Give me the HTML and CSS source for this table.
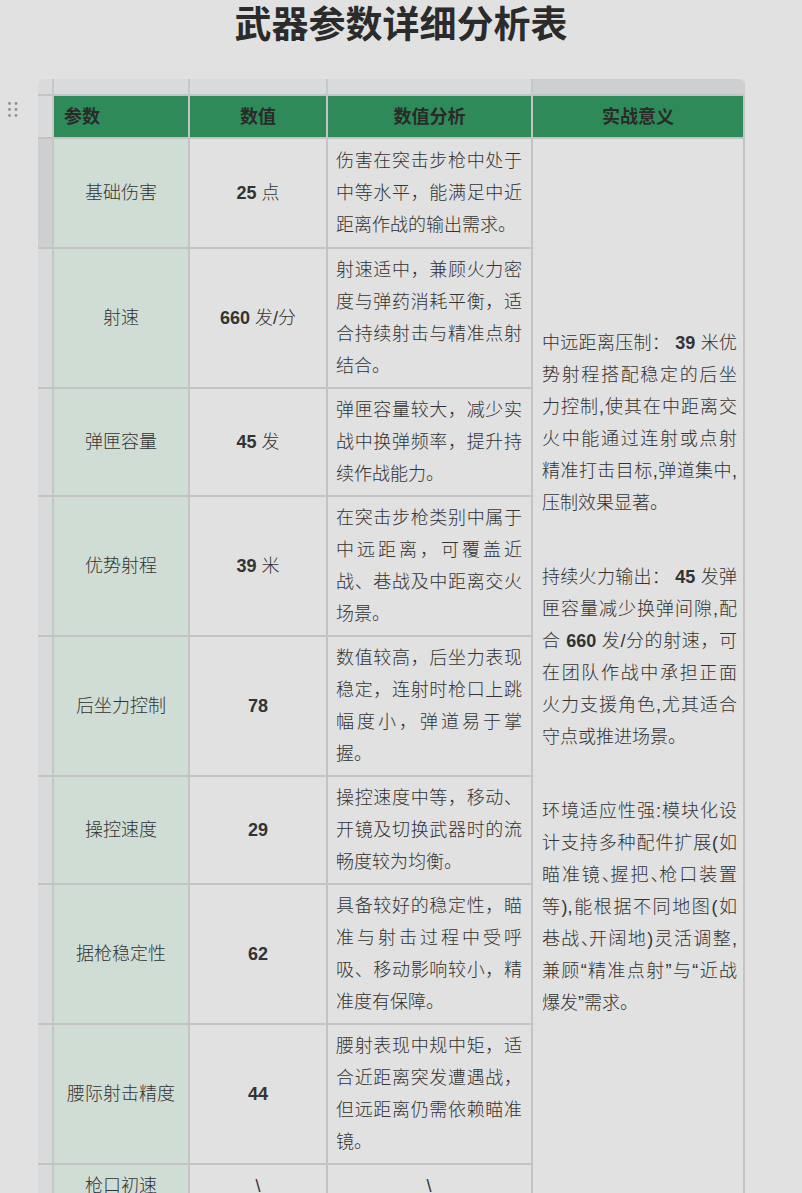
FILE: index.html
```html
<!DOCTYPE html>
<html lang="zh-CN">
<head>
<meta charset="utf-8">
<title>武器参数详细分析表</title>
<link rel="stylesheet" href="styles.css">
</head>
<body>
<h1 class="title">武器参数详细分析表</h1>
<div class="sheet">
  <svg class="handle" width="10" height="15" viewBox="0 0 10 15" aria-hidden="true">
    <circle cx="1.5" cy="1.5" r="1.4"/><circle cx="8" cy="1.5" r="1.4"/>
    <circle cx="1.5" cy="7.5" r="1.4"/><circle cx="8" cy="7.5" r="1.4"/>
    <circle cx="1.5" cy="13.5" r="1.4"/><circle cx="8" cy="13.5" r="1.4"/>
  </svg>
  <table class="grid">
    <colgroup>
      <col class="c-gut"><col class="c-1"><col class="c-2"><col class="c-3"><col class="c-4">
    </colgroup>
    <tr class="gut-row">
      <td class="gut corner"></td><td class="gut"></td><td class="gut"></td><td class="gut"></td><td class="gut gut-sel gut-end"></td>
    </tr>
    <tr class="head">
      <td class="gut"></td><th class="h-left">参数</th><th>数值</th><th>数值分析</th><th>实战意义</th>
    </tr>
    <tr class="first">
      <td class="gut gut-sel"></td>
      <td class="name">基础伤害</td>
      <td class="val"><span class="num">25</span> 点</td>
      <td class="txt">伤害在突击步枪中处于中等水平，能满足中近距离作战的输出需求。</td>
      <td class="meaning" rowspan="9">
        <p>中远距离压制： <span class="num">39</span> 米优势射程搭配稳定的后坐力控制,使其在中距离交火中能通过连射或点射精准打击目标,弹道集中,压制效果显著。</p>
        <p>持续火力输出： <span class="num">45</span> 发弹匣容量减少换弹间隙,配合 <span class="num">660</span> 发/分的射速，可在团队作战中承担正面火力支援角色,尤其适合守点或推进场景。</p>
        <p>环境适应性强:模块化设计支持多种配件扩展(如瞄准镜<span class="half">、</span>握把<span class="half">、</span>枪口装置等),能根据不同地图(如巷战<span class="half">、</span>开阔地)灵活调整,兼顾“精准点射”与“近战爆发”需求。</p>
      </td>
    </tr>
    <tr>
      <td class="gut"></td>
      <td class="name">射速</td>
      <td class="val"><span class="num">660</span> 发/分</td>
      <td class="txt">射速适中，兼顾火力密度与弹药消耗平衡，适合持续射击与精准点射结合。</td>
    </tr>
    <tr>
      <td class="gut"></td>
      <td class="name">弹匣容量</td>
      <td class="val"><span class="num">45</span> 发</td>
      <td class="txt">弹匣容量较大，减少实战中换弹频率，提升持续作战能力。</td>
    </tr>
    <tr>
      <td class="gut"></td>
      <td class="name">优势射程</td>
      <td class="val"><span class="num">39</span> 米</td>
      <td class="txt">在突击步枪类别中属于中远距离，可覆盖近战、巷战及中距离交火场景。</td>
    </tr>
    <tr>
      <td class="gut"></td>
      <td class="name">后坐力控制</td>
      <td class="val"><span class="num">78</span></td>
      <td class="txt">数值较高，后坐力表现稳定，连射时枪口上跳幅度小，弹道易于掌握。</td>
    </tr>
    <tr>
      <td class="gut"></td>
      <td class="name">操控速度</td>
      <td class="val"><span class="num">29</span></td>
      <td class="txt">操控速度中等，移动、开镜及切换武器时的流畅度较为均衡。</td>
    </tr>
    <tr>
      <td class="gut"></td>
      <td class="name">据枪稳定性</td>
      <td class="val"><span class="num">62</span></td>
      <td class="txt">具备较好的稳定性，瞄准与射击过程中受呼吸、移动影响较小，精准度有保障。</td>
    </tr>
    <tr>
      <td class="gut"></td>
      <td class="name">腰际射击精度</td>
      <td class="val"><span class="num">44</span></td>
      <td class="txt">腰射表现中规中矩，适合近距离突发遭遇战，但远距离仍需依赖瞄准镜。</td>
    </tr>
    <tr>
      <td class="gut"></td>
      <td class="name">枪口初速</td>
      <td class="val">\</td>
      <td class="txt center">\</td>
    </tr>
  </table>
</div>
</body>
</html>
```

FILE: styles.css
```css
* {
  box-sizing: border-box;
}

html,
body {
  margin: 0;
  background: #e1e1e1;
}

body {
  font-family: "Liberation Sans", "Noto Sans CJK SC", sans-serif;
  color: #333333;
}

.title {
  margin: 0;
  font-size: 37px;
  line-height: 52px;
  font-weight: 700;
  text-align: center;
  color: #2b2b2b;
}

.sheet {
  position: relative;
  width: 707px;
  margin: 27px 0 0 38px;
}

.handle {
  position: absolute;
  left: -30px;
  top: 23px;
  fill: #8d8f94;
}

.grid {
  width: 707px;
  table-layout: fixed;
  border-collapse: separate;
  border-spacing: 0;
  font-size: 18px;
  line-height: 32px;
}

.c-gut { width: 16px; }
.c-1 { width: 136px; }
.c-2 { width: 138px; }
.c-3 { width: 205px; }
.c-4 { width: 212px; }

.grid td,
.grid th {
  padding: 5px 10px;
  border-right: 2px solid #c3c3c3;
  border-bottom: 2px solid #c3c3c3;
  background: #e1e1e1;
  vertical-align: middle;
  font-weight: 300;
}

.grid .first td {
  padding-top: 6px;
  padding-bottom: 6px;
}

.grid td.gut {
  padding: 0;
  background: #d9dadc;
  border-right-color: #c6c7c9;
}

.grid td.gut-sel {
  background: #cecfd1;
}

.gut-row td {
  height: 17px;
}

.grid td.corner {
  border-top-left-radius: 6px;
}

.grid td.gut-end {
  border-top-right-radius: 6px;
  border-right-color: transparent;
}

.head th {
  padding: 5px 10px 4px;
  background: #2e8a58;
  color: #2a2a2a;
  font-weight: 700;
  text-align: center;
}

.head th.h-left {
  text-align: left;
}

.grid td.name {
  background: #d0ddd5;
  text-align: center;
}

.val {
  text-align: center;
}

.num {
  font-weight: 700;
}

.grid td.txt {
  padding-left: 8px;
  padding-right: 9px;
  text-align: justify;
}

.grid td.txt.center {
  text-align: center;
}

.grid td.meaning {
  padding: 5px 6px 5px 9px;
  text-align: justify;
}

.meaning p {
  margin: 0;
}

.meaning p + p {
  margin-top: 42px;
}

.half {
  font-feature-settings: "halt";
  letter-spacing: -2px;
}
```
